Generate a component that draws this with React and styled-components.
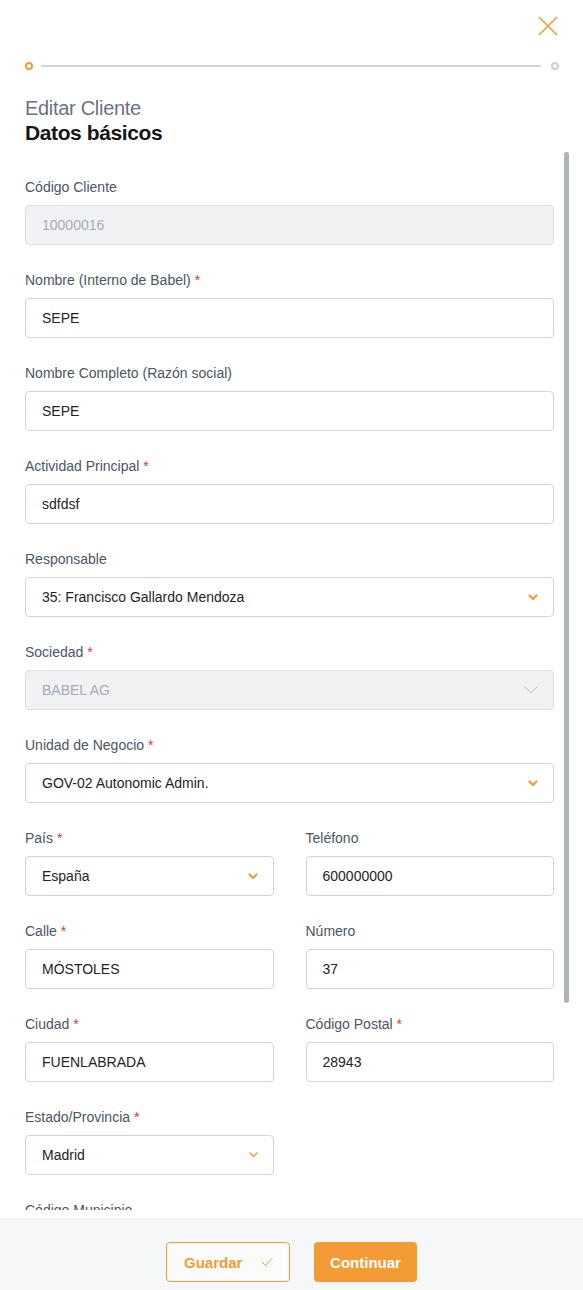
import React from 'react';
import styled, { createGlobalStyle } from 'styled-components';

const orange = '#f39c35';

const GlobalStyle = createGlobalStyle`
    html, body {
        margin: 0;
        padding: 0;
        background: #ffffff;
        font-family: "Liberation Sans", Arial, sans-serif;
    }
    * {
        box-sizing: border-box;
    }
`;

const ChevronBold = () => (
    <svg width="10" height="7" viewBox="0 0 10 7">
        <path d="M1.5 1.5 L5 5 L8.5 1.5" fill="none" stroke={orange} strokeWidth="2.2" strokeLinecap="round" strokeLinejoin="round" />
    </svg>
);

const ChevronThin = ({ color, size, weight }) => (
    <svg width={size} height={size / 2 + 1} viewBox={`0 0 ${size} ${size / 2 + 1}`}>
        <path d={`M0.5 0.5 L${size / 2} ${size / 2} L${size - 0.5} 0.5`} fill="none" stroke={color} strokeWidth={weight} />
    </svg>
);

const fields = [
    { label: 'Código Cliente', value: '10000016', disabled: true },
    { label: 'Nombre (Interno de Babel)', value: 'SEPE', required: true },
    { label: 'Nombre Completo (Razón social)', value: 'SEPE' },
    { label: 'Actividad Principal', value: 'sdfdsf', required: true },
    { label: 'Responsable', value: '35: Francisco Gallardo Mendoza', select: 'bold' },
    { label: 'Sociedad', value: 'BABEL AG', required: true, disabled: true, select: 'thin' },
    { label: 'Unidad de Negocio', value: 'GOV-02 Autonomic Admin.', required: true, select: 'bold' },
];

const pairs = [
    [
        { label: 'País', value: 'España', required: true, select: 'bold' },
        { label: 'Teléfono', value: '600000000' },
    ],
    [
        { label: 'Calle', value: 'MÓSTOLES', required: true },
        { label: 'Número', value: '37' },
    ],
    [
        { label: 'Ciudad', value: 'FUENLABRADA', required: true },
        { label: 'Código Postal', value: '28943', required: true },
    ],
    [
        { label: 'Estado/Provincia', value: 'Madrid', required: true, select: 'small' },
        null,
    ],
    [
        { label: 'Código Municipio', value: '28058' },
        null,
    ],
];

const Field = ({ label, value, required, disabled, select }) => (
    <FieldBox>
        <Label>
            {label}
            {required && <Star> *</Star>}
        </Label>
        <InputBox disabled={disabled}>
            <span>{value}</span>
            {select === 'bold' && <ChevronBold />}
            {select === 'thin' && <ChevronThin color="#b8bec6" size={14} weight={1} />}
            {select === 'small' && <ChevronThin color={orange} size={9} weight={1.3} />}
        </InputBox>
    </FieldBox>
);

const App = () => {
    return (
        <Panel>
            <GlobalStyle />
            <Header>
                <CloseButton aria-label="Cerrar">
                    <svg width="20" height="20" viewBox="0 0 20 20">
                        <path d="M1 1 L19 19 M19 1 L1 19" stroke={orange} strokeWidth="1.6" />
                    </svg>
                </CloseButton>
                <Stepper>
                    <StepDot active />
                    <StepLine />
                    <StepDot />
                </Stepper>
                <Subtitle>Editar Cliente</Subtitle>
                <Title>Datos básicos</Title>
            </Header>
            <ScrollArea>
                <Form>
                    {fields.map((f) => (
                        <Field key={f.label} {...f} />
                    ))}
                    {pairs.map((pair, i) => (
                        <Row key={i}>
                            {pair.map((f, j) => (f ? <Field key={f.label} {...f} /> : <div key={j} />))}
                        </Row>
                    ))}
                </Form>
                <ScrollTrack>
                    <ScrollThumb />
                </ScrollTrack>
            </ScrollArea>
            <Footer>
                <SaveButton>
                    Guardar
                    <svg width="12" height="10" viewBox="0 0 12 10">
                        <path d="M1 5 L4.5 8.5 L11 1.5" fill="none" stroke={orange} strokeWidth="1" />
                    </svg>
                </SaveButton>
                <ContinueButton>Continuar</ContinueButton>
            </Footer>
        </Panel>
    );
};

const Panel = styled.div`
    height: 100vh;
    display: flex;
    flex-direction: column;
    background: #ffffff;
`;

const Header = styled.div`
    display: flex;
    flex-direction: column;
    padding: 16px 24px 0 25px;
    flex-shrink: 0;
`;

const CloseButton = styled.button`
    align-self: flex-end;
    width: 20px;
    height: 20px;
    padding: 0;
    margin-right: 1px;
    border: none;
    background: none;
    display: flex;
    cursor: pointer;
`;

const Stepper = styled.div`
    display: flex;
    align-items: center;
    margin-top: 26px;
    height: 8px;
`;

const StepDot = styled.span`
    width: 8px;
    height: 8px;
    border-radius: 50%;
    border: 2px solid ${({ active }) => (active ? orange : '#ccd0d6')};
    flex-shrink: 0;
`;

const StepLine = styled.span`
    flex: 1;
    height: 2px;
    background: #d1d5db;
    margin: 0 10px 0 8px;
`;

const Subtitle = styled.div`
    margin-top: 26px;
    font-size: 20px;
    line-height: 24px;
    color: #6b7280;
    letter-spacing: -0.3px;
`;

const Title = styled.div`
    font-size: 21px;
    line-height: 26px;
    font-weight: 600;
    color: #161616;
    letter-spacing: -0.4px;
`;

const ScrollArea = styled.div`
    flex: 1;
    min-height: 0;
    display: flex;
    margin: 6px 14px 8px 25px;
`;

const Form = styled.div`
    flex: 1;
    min-width: 0;
    overflow: hidden;
    padding-top: 25px;
`;

const ScrollTrack = styled.div`
    width: 5px;
    margin-left: 10px;
    flex-shrink: 0;
`;

const ScrollThumb = styled.div`
    height: 851px;
    border-radius: 3px;
    background: #adb4bc;
`;

const FieldBox = styled.div`
    margin-bottom: 25px;
`;

const Row = styled.div`
    display: grid;
    grid-template-columns: 1fr 1fr;
    column-gap: 32px;
`;

const Label = styled.div`
    font-size: 14px;
    line-height: 20px;
    color: #4b5563;
    margin-bottom: 8px;
    white-space: nowrap;
`;

const Star = styled.span`
    color: #e3342f;
`;

const InputBox = styled.div`
    height: 40px;
    border: 1px solid ${({ disabled }) => (disabled ? '#dcdfe3' : '#d1d5db')};
    border-radius: 4px;
    background: ${({ disabled }) => (disabled ? '#f1f2f4' : '#ffffff')};
    color: ${({ disabled }) => (disabled ? '#a6acb4' : '#1f2328')};
    font-size: 14px;
    display: flex;
    align-items: center;
    justify-content: space-between;
    padding: 0 15px 0 16px;
`;

const Footer = styled.div`
    flex-shrink: 0;
    height: 72px;
    background: #f6f7f9;
    display: flex;
    justify-content: center;
    align-items: flex-start;
    gap: 24px;
    padding-top: 24px;
`;

const SaveButton = styled.button`
    width: 124px;
    height: 40px;
    border: 1px solid ${orange};
    border-radius: 4px;
    background: #fbfbfc;
    color: ${orange};
    font-family: "Liberation Sans", Arial, sans-serif;
    font-size: 15px;
    font-weight: 700;
    display: flex;
    align-items: center;
    justify-content: space-between;
    padding: 0 16px 0 17px;
`;

const ContinueButton = styled.button`
    width: 103px;
    height: 40px;
    border: none;
    border-radius: 4px;
    background: ${orange};
    color: #ffffff;
    font-family: "Liberation Sans", Arial, sans-serif;
    font-size: 15px;
    font-weight: 700;
`;

export default App;
